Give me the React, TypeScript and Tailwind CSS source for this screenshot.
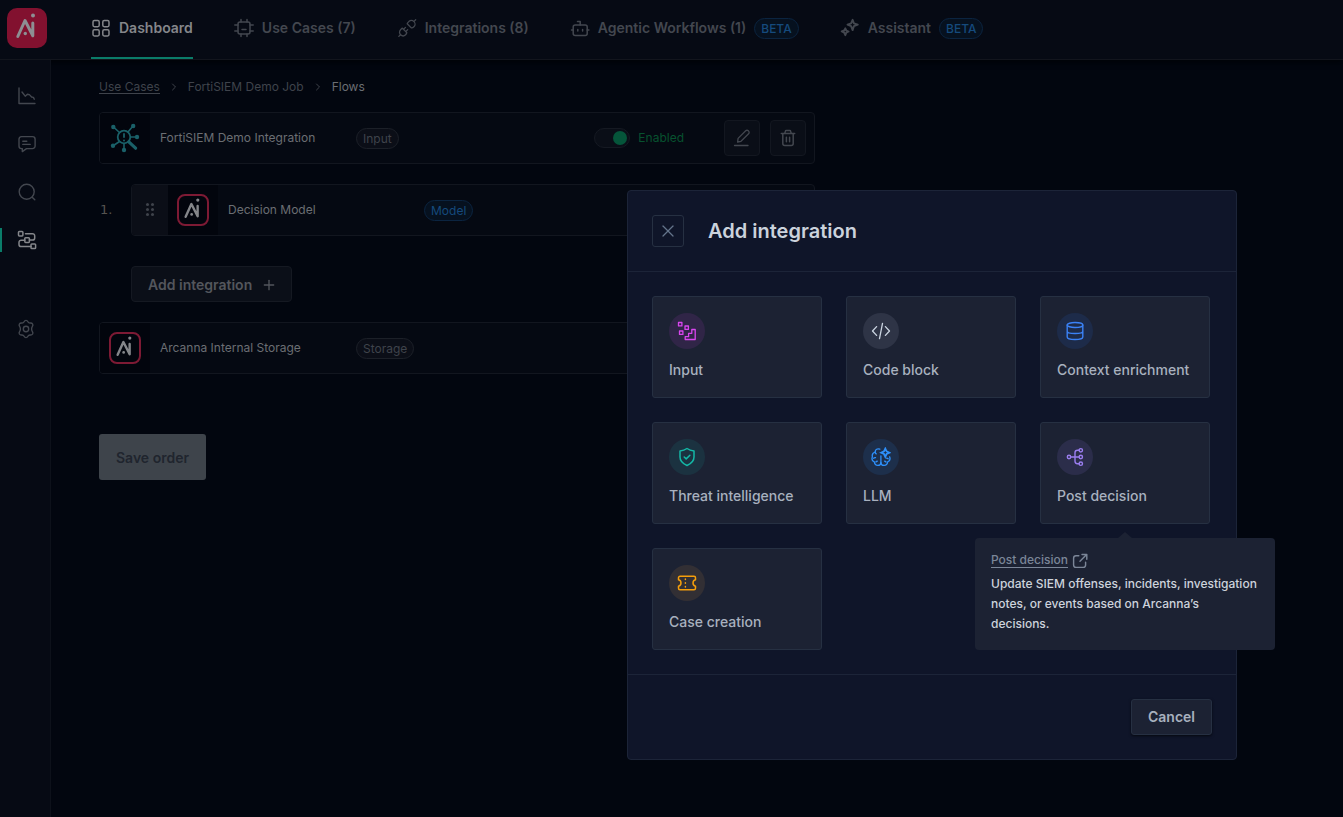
import type { ReactNode } from 'react';
import { ChevronRight, Plus, X } from 'lucide-react';

type IconProps = { className?: string };

function Svg({ className, width = 1.5, children }: IconProps & { width?: number; children: ReactNode }) {
  return (
    <svg
      className={className}
      viewBox="0 0 20 20"
      fill="none"
      stroke="currentColor"
      strokeWidth={width}
      strokeLinecap="round"
      strokeLinejoin="round"
      aria-hidden="true"
    >
      {children}
    </svg>
  );
}

const GridIcon = ({ className }: IconProps) => (
  <Svg className={className}>
    <rect x="2" y="2.5" width="6.2" height="6.2" rx="1.4" />
    <rect x="11.8" y="2.5" width="6.2" height="6.2" rx="1.4" />
    <rect x="2" y="11.8" width="6.2" height="6.2" rx="1.4" />
    <rect x="11.8" y="11.8" width="6.2" height="6.2" rx="1.4" />
  </Svg>
);

const ChipIcon = ({ className }: IconProps) => (
  <Svg className={className}>
    <rect x="4" y="4" width="12" height="12" rx="2" />
    <path d="M7 4V1.5M13 4V1.5M7 18.5V16M13 18.5V16M4 13H.8M19.2 13H16M.8 7H4M16 7h3.2M8 11.5h4" />
  </Svg>
);

const PlugIcon = ({ className }: IconProps) => (
  <Svg className={className} width={1.3}>
    <path d="M10.2 5.8l4 4c1 .2 2-.3 2.7-1 1.5-1.5 1.5-3.8.1-5.2s-3.7-1.4-5.2 0c-.8.8-1.4 1.5-1.6 2.2z" />
    <path d="M5.4 10.2l4.4 4.4c-.1.8-.6 1.5-1.2 2.1-1.5 1.5-3.6 1.4-5 0s-1.5-3.5 0-5c.6-.6 1.2-1.2 1.8-1.5z" />
    <path d="M17 3.4l1.7-1.7M3.5 16.7l-1.7 1.7M6.6 11.3l1.9-1.9M8.8 13.5l1.9-1.9" />
  </Svg>
);

const BotIcon = ({ className }: IconProps) => (
  <Svg className={className}>
    <rect x="3.2" y="7" width="14" height="10.5" rx="2" />
    <path d="M10.2 7V3.5H7.5M3.2 12H1.5M17.2 12h1.7M7.8 11.5v1.6M12.6 11.5v1.6" />
  </Svg>
);

const SparkIcon = ({ className }: IconProps) => (
  <Svg className={className} width={1.9}>
    <path d="M12.6 1.8l1.3 3.5 3.9 1.4-3.9 1.5-1.3 3.9-1.5-3.9L7.5 6.7l3.6-1.4z" />
    <path d="M5.3 10.3l1 2.2 2.3 1-2.3 1.1-1 2.6-1.1-2.6-2.5-1.1 2.5-1z" />
  </Svg>
);

const ChartIcon = ({ className }: IconProps) => (
  <Svg className={className} width={1.4}>
    <path d="M2 2v15.5h16M5 6l3.2 4.2 2.2-2 2 .4 2.2 2.4 1.8.4.9 1.8" />
  </Svg>
);

const ChatIcon = ({ className }: IconProps) => (
  <Svg className={className} width={1.4}>
    <path d="M4.5 2.6h11a2.600 2.600 0 0 1 2.600 2.600v6.800a2.600 2.600 0 0 1-2.600 2.600H9.500l-4.200 3v-3h-.8A2.600 2.600 0 0 1 2 12V5.200a2.600 2.600 0 0 1 2.500-2.600z" />
    <path d="M5.8 7.2h4M5.8 10.4h7.4" />
  </Svg>
);

const SearchIcon = ({ className }: IconProps) => (
  <Svg className={className} width={1.4}>
    <circle cx="9.7" cy="9.7" r="7.5" />
    <path d="M15.2 15.2l2.6 2.6" />
  </Svg>
);

const FlowIcon = ({ className }: IconProps) => (
  <Svg className={className} width={1.5}>
    <rect x="1.5" y="1.5" width="4.4" height="4.4" rx=".8" />
    <rect x="7.8" y="7.8" width="4.6" height="4.6" rx=".8" />
    <rect x="14" y="14" width="4.600" height="4.600" rx=".8" />
    <path d="M8.5 3.7h7a2.200 2.200 0 0 1 2.200 2.200v2a2.200 2.200 0 0 1-2.200 2.200h-3.100M7.800 10.200H4.200A2.200 2.200 0 0 0 2 12.400v2a2.200 2.200 0 0 0 2.200 2.200H14" />
  </Svg>
);

const GearIcon = ({ className }: IconProps) => (
  <Svg className={className} width={1.4}>
    <path d="M10 1.400c.9 0 1.500.5 1.900 1.300.5 1 1.300 1.400 2.400 1.300 1-.1 1.800.2 2.300 1 .5.9.3 1.700-.2 2.400-.7 1-.8 1.700-.8 2.600s.1 1.600.8 2.600c.5.7.7 1.500.2 2.400-.5.8-1.300 1.100-2.300 1-1.100-.1-1.900.3-2.400 1.300-.4.8-1 1.300-1.900 1.300s-1.500-.5-1.900-1.300c-.5-1-1.300-1.400-2.400-1.300-1 .1-1.800-.2-2.300-1-.5-.9-.3-1.700.2-2.400.7-1 .8-1.700.8-2.600s-.1-1.600-.8-2.600c-.5-.7-.7-1.500-.2-2.400.5-.8 1.300-1.100 2.300-1 1.100.1 1.900-.3 2.400-1.300.4-.8 1-1.300 1.900-1.300z" />
    <circle cx="10" cy="10" r="2.7" />
  </Svg>
);

const PenIcon = ({ className }: IconProps) => (
  <Svg className={className} width={1.3}>
    <path d="M5.600 14l.5-3.600 7.600-7.600a1.800 1.800 0 0 1 2.600 0l.3.3a1.800 1.800 0 0 1 0 2.600L9 13.300zM2.500 17.500h13.500" />
  </Svg>
);

const TrashIcon = ({ className }: IconProps) => (
  <Svg className={className} width={1.5}>
    <path d="M3.300 5.600h13.400M4.800 5.600v9.900a2 2 0 0 0 2 2h6.400a2 2 0 0 0 2-2V5.600M6.800 5.300l.5-1.900c.1-.5.5-.8 1-.8h3.400c.5 0 .9.3 1 .8l.5 1.900M8.400 9.200v4.600M11.600 9.200v4.600" />
  </Svg>
);

const StepsIcon = ({ className }: IconProps) => (
  <Svg className={className} width={1.3}>
    <rect x="1.5" y="1.5" width="3.4" height="3.4" />
    <rect x="8" y="5" width="3.4" height="3.4" />
    <rect x="2.5" y="10" width="3.4" height="3.4" />
    <path d="M18.2 8.500v10H8.200v-2.800h3.400v-3.400h3.200V8.500z" />
  </Svg>
);

const CodeIcon = ({ className }: IconProps) => (
  <Svg className={className} width={1.3}>
    <path d="M5.600 5.600L1.500 10l4.100 4.400M14.400 5.600l4.100 4.400-4.100 4.400M11.500 2.300l-3 15.400" />
  </Svg>
);

const DatabaseIcon = ({ className }: IconProps) => (
  <Svg className={className} width={1.4}>
    <ellipse cx="10" cy="4" rx="7.8" ry="2.5" />
    <path d="M2.200 4v12c0 1.400 3.500 2.500 7.800 2.500s7.800-1.100 7.800-2.500V4M2.200 10.200c0 1.400 3.500 2.300 7.800 2.300s7.800-.9 7.800-2.300" />
  </Svg>
);

const ShieldIcon = ({ className }: IconProps) => (
  <Svg className={className} width={1.5}>
    <path d="M10 1.500c2 1.500 4.500 2.300 7 2.500v6c0 4-3.200 6.800-7 8.500-3.800-1.700-7-4.500-7-8.500V4c2.500-.2 5-1 7-2.500z" />
    <path d="M7.200 10l2 1.900 3.700-3.600" />
  </Svg>
);

const BrainIcon = ({ className }: IconProps) => (
  <Svg className={className} width={1.3}>
    <path d="M8.800 2.200C6.500 1.200 4.200 2.400 4.200 5 2 5.700.9 7.800 1.400 9.800.6 11.800 1.200 14 3.300 14.900 3.600 17 5 18.400 6.800 18.400c1.700 0 3.100-1.300 3.100-3V8.800" />
    <path d="M9.900 15.400c0 1.700 1.500 3 3.200 3 1.900 0 3.300-1.400 3.600-3.500 2.100-.9 2.700-3.100 1.900-5.100M4.200 5c0 .8.4 1.500 1 1.900M2.600 11.200c.6-.5 1.200-.6 1.900-.5M15.600 11.200c.6 0 1.100.1 1.500.5M6.300 14.200c-.6.1-1.100.4-1.400.8M13.600 14.200c.6.1 1.100.4 1.400.8" />
    <path
      strokeWidth="1.800"
      strokeLinejoin="miter"
      d="M14.300 1.600l1.300 2.800 2.800 1.300-2.800 1.300-1.300 2.800L13 7l-2.800-1.300L13 4.400z"
    />
  </Svg>
);

const BranchIcon = ({ className }: IconProps) => (
  <Svg className={className} width={1.4}>
    <circle cx="4" cy="10" r="1.7" />
    <circle cx="15.8" cy="3.3" r="1.7" />
    <circle cx="15.8" cy="10" r="1.7" />
    <circle cx="15.8" cy="16.7" r="1.7" />
    <path d="M5.700 10h8.400M14.100 3.300h-1.700a2.400 2.400 0 0 0-2.400 2.400v8.600a2.400 2.400 0 0 0 2.400 2.400h1.700" />
  </Svg>
);

const TicketIcon = ({ className }: IconProps) => (
  <Svg className={className} width={1.5}>
    <path d="M3 3.300h14a1.500 1.500 0 0 1 1.500 1.500v2a3.300 3.300 0 0 0 0 6.400v2a1.500 1.500 0 0 1-1.500 1.500H3a1.500 1.500 0 0 1-1.500-1.500v-2a3.300 3.300 0 0 0 0-6.400v-2A1.500 1.500 0 0 1 3 3.300z" />
    <path d="M8.400 6v.5M8.400 9.700v.6M8.400 13.500v.5" />
  </Svg>
);

const ExternalIcon = ({ className }: IconProps) => (
  <Svg className={className} width={1.8}>
    <path d="M8.500 3.500H5A3 3 0 0 0 2 6.500V15a3 3 0 0 0 3 3h9a3 3 0 0 0 3-3v-3.500M12.500 1.800h6v6M18 2.300l-8 8" />
  </Svg>
);

function LogoMark({ className }: IconProps) {
  return (
    <svg className={className} viewBox="0 0 40 40" fill="none" aria-hidden="true">
      <path
        d="M10.800 28.500L18 12.500l7.800 15.300V15"
        stroke="currentColor"
        strokeWidth="3"
        strokeLinecap="round"
        strokeLinejoin="round"
      />
      <circle cx="26" cy="7.6" r="2" fill="currentColor" />
      <circle cx="18.3" cy="25.5" r="1.7" fill="currentColor" />
    </svg>
  );
}

function NetworkLogo({ className }: IconProps) {
  return (
    <svg className={className} viewBox="0 0 32 32" fill="none" stroke="currentColor" aria-hidden="true">
      <circle cx="15" cy="15" r="6.3" strokeWidth="1.8" />
      <path d="M10.500 10.500L5 5.500M19 10l5-6M21.500 15h6M10.500 19.500L4.500 23.500M15 21.500v6.500" strokeWidth="1.6" />
      <path d="M19.800 19.800l6.800 6.400" strokeWidth="3.2" strokeLinecap="round" />
      <path d="M15 11.200v4.600" strokeWidth="1.8" />
      <g fill="currentColor" stroke="none">
        <circle cx="15" cy="18.4" r="1" />
        <circle cx="4.3" cy="5" r="2.2" />
        <circle cx="24.2" cy="4" r="2.2" />
        <circle cx="28" cy="15" r="2.2" />
        <circle cx="4" cy="23.8" r="2.2" />
        <circle cx="15" cy="28" r="2.2" />
      </g>
    </svg>
  );
}

function ModelLogo() {
  return (
    <span className="flex size-8 items-center justify-center rounded-lg border-2 border-[#7d1a34] text-[#84868a]">
      <LogoMark className="size-8 shrink-0" />
    </span>
  );
}

const tabs = [
  { label: 'Dashboard', Icon: GridIcon, active: true },
  { label: 'Use Cases (7)', Icon: ChipIcon },
  { label: 'Integrations (8)', Icon: PlugIcon },
  { label: 'Agentic Workflows (1)', Icon: BotIcon, beta: true },
  { label: 'Assistant', Icon: SparkIcon, beta: true },
];

function Header() {
  return (
    <header className="flex h-15 items-stretch border-b border-[#12151d] bg-[#060a14] shadow-md shadow-black/40">
      <a href="#home" aria-label="Home" className="mt-2 ml-[7px] flex size-10 rounded-[10px] bg-[#82112f] text-[#8d8f93]">
        <LogoMark className="size-10" />
      </a>
      <nav aria-label="Main" className="ml-11 flex gap-[41px]">
        {tabs.map(({ label, Icon, active, beta }) => (
          <a
            key={label}
            href="#tab"
            className={
              'flex items-center gap-2 border-b-2 pb-px text-sm font-semibold whitespace-nowrap ' +
              (active ? 'border-[#0a7c69] text-[#84868a]' : 'border-transparent text-[#43474f]')
            }
          >
            <Icon className="size-5" />
            {label}
            {beta && (
              <span className="rounded-full border border-[#0b2440] bg-[#06111f] px-1.5 text-xs leading-[19px] font-medium text-[#154a7c]">
                BETA
              </span>
            )}
          </a>
        ))}
      </nav>
    </header>
  );
}

const sideItems = [
  { label: 'Analytics', Icon: ChartIcon },
  { label: 'Feedback', Icon: ChatIcon },
  { label: 'Explorer', Icon: SearchIcon },
  { label: 'Flows', Icon: FlowIcon, active: true },
];

function Sidebar() {
  return (
    <nav aria-label="Job" className="flex w-[51px] shrink-0 flex-col border-r border-[#0d111a] bg-[#060a14] pt-6 text-[#43474f]">
      <div className="flex flex-col gap-6">
        {sideItems.map(({ label, Icon, active }) => (
          <a
            key={label}
            href="#section"
            aria-label={label}
            className={
              'flex h-6 items-center border-l-2 pl-[15px] ' +
              (active ? 'border-[#0a7c69] text-[#84868a]' : 'border-transparent')
            }
          >
            <Icon className="size-5" />
          </a>
        ))}
      </div>
      <a href="#settings" aria-label="Settings" className="mt-[65px] flex h-6 items-center pl-4">
        <GearIcon className="size-5" />
      </a>
    </nav>
  );
}

function Pill({ tone, children }: { tone: 'gray' | 'blue'; children: ReactNode }) {
  return (
    <span
      className={
        'rounded-full border px-1.5 text-xs leading-[19px] ' +
        (tone === 'blue'
          ? 'border-[#0b2440] bg-[#06111f] text-[#154a7c]'
          : 'border-[#1c2028] bg-[#0b0e17] text-[#3f434b]')
      }
    >
      {children}
    </span>
  );
}

function FlowRow({
  logo,
  name,
  pill,
  tone = 'gray',
  handle,
  children,
}: {
  logo: ReactNode;
  name: string;
  pill: string;
  tone?: 'gray' | 'blue';
  handle?: boolean;
  children?: ReactNode;
}) {
  return (
    <div className="flex h-[52px] min-w-0 flex-1 items-stretch overflow-hidden rounded border border-[#12161f] bg-[#050912]">
      {handle && (
        <button aria-label="Reorder" className="flex w-9 items-center justify-center bg-[#0b0e17] text-[#3f434b]">
          <svg className="h-4 w-3" viewBox="0 0 12 16" fill="currentColor" aria-hidden="true">
            <circle cx="3.5" cy="2.5" r="1.5" />
            <circle cx="8.5" cy="2.5" r="1.5" />
            <circle cx="3.5" cy="7.5" r="1.5" />
            <circle cx="8.5" cy="7.5" r="1.5" />
            <circle cx="3.5" cy="12.5" r="1.5" />
            <circle cx="8.5" cy="12.5" r="1.5" />
          </svg>
        </button>
      )}
      <div className="flex w-[50px] shrink-0 items-center justify-center bg-[#02050d]">{logo}</div>
      <div className="flex min-w-0 flex-1 items-center pr-2 pl-2.5">
        <span className="w-49 text-xs text-[#6b6e73]">{name}</span>
        <Pill tone={tone}>{pill}</Pill>
        {children}
      </div>
    </div>
  );
}

const iconButton =
  'flex size-9 items-center justify-center rounded border border-[#131720] bg-[#0a0e17] text-[#43474f]';

function Flows() {
  return (
    <main className="min-w-0 flex-1 px-12 pt-4">
      <nav aria-label="Breadcrumb" className="flex h-[22px] items-center gap-2 text-xs text-[#3f434b]">
        <a href="#use-cases" className="border-b border-[#3f434b] leading-[13px]">
          Use Cases
        </a>
        <ChevronRight className="size-3" />
        <span>FortiSIEM Demo Job</span>
        <ChevronRight className="size-3" />
        <span className="text-[#6b6e73]">Flows</span>
      </nav>

      <div className="mt-3.5 flex max-w-[716px] flex-col gap-5">
        <div className="flex">
          <FlowRow logo={<NetworkLogo className="size-8 text-[#1a6068]" />} name="FortiSIEM Demo Integration" pill="Input">
            <label className="ml-auto flex items-center gap-2 text-xs text-[#07522f]">
              <input type="checkbox" role="switch" defaultChecked className="peer sr-only" />
              <span className="flex h-5 w-9 items-center justify-end rounded-full border border-[#151922] bg-[#0a0e17] px-0.5">
                <span className="size-3.5 rounded-full bg-[#05553a]" />
              </span>
              Enabled
            </label>
            <button aria-label="Edit" className={'ml-10 ' + iconButton}>
              <PenIcon className="size-5" />
            </button>
            <button aria-label="Delete" className={'ml-2.5 ' + iconButton}>
              <TrashIcon className="size-5" />
            </button>
          </FlowRow>
        </div>

        <div className="flex items-center">
          <span className="w-8 pl-px font-['DejaVu_Sans',sans-serif] text-[13px] text-[#55534f]">1.</span>
          <FlowRow handle logo={<ModelLogo />} name="Decision Model" pill="Model" tone="blue" />
        </div>

        <div className="mt-2.5 ml-8 flex">
          <button className="flex h-9 items-center gap-[9px] rounded border border-[#151922] bg-[#0b0f18] pt-px pr-3.5 pl-4 text-sm font-semibold text-[#53565c]">
            Add integration
            <Plus className="size-4" strokeWidth={2} />
          </button>
        </div>

        <div className="flex">
          <FlowRow logo={<ModelLogo />} name="Arcanna Internal Storage" pill="Storage" />
        </div>
      </div>

      <button className="mt-15 h-[46px] rounded-[3px] bg-[#3e444b] px-[17px] pt-px text-sm font-semibold text-[#20252e]">
        Save order
      </button>
    </main>
  );
}

const kinds = [
  { label: 'Input', Icon: StepsIcon, tint: 'bg-[#302547] text-[#d946ef]' },
  { label: 'Code block', Icon: CodeIcon, tint: 'bg-[#2e3446] text-[#cbd5e1]' },
  { label: 'Context enrichment', Icon: DatabaseIcon, tint: 'bg-[#1d2b49] text-[#3b82f6]' },
  { label: 'Threat intelligence', Icon: ShieldIcon, tint: 'bg-[#1b3240] text-[#14b8a6]' },
  { label: 'LLM', Icon: BrainIcon, tint: 'bg-[#1d2f4b] text-[#2e90fa]' },
  { label: 'Post decision', Icon: BranchIcon, tint: 'bg-[#2b2d4a] text-[#9b7ef0]', tip: true },
  { label: 'Case creation', Icon: TicketIcon, tint: 'bg-[#322f34] text-[#f59e0b]' },
];

function Tip() {
  return (
    <div
      role="tooltip"
      className="absolute top-full left-1/2 z-10 mt-3.5 w-[300px] -translate-x-1/2 rounded bg-[#1c2233] px-4 pt-3 pb-4 text-xs leading-5 font-medium text-[#cdd3dc]"
    >
      <svg className="absolute -top-1.5 left-1/2 h-1.5 w-3.5 -translate-x-1/2" viewBox="0 0 14 6" aria-hidden="true">
        <path d="M0 6L7 0l7 6z" fill="#1c2233" />
      </svg>
      <a href="#post-decision" className="mb-1 flex h-5 items-center gap-1 pt-px text-[#7b8698]">
        <span className="border-b border-[#7b8698] leading-[14px]">Post decision</span>
        <ExternalIcon className="size-4" />
      </a>
      <p>Update SIEM offenses, incidents, investigation notes, or events based on Arcanna’s decisions.</p>
    </div>
  );
}

function AddIntegrationDialog() {
  return (
    <section
      role="dialog"
      aria-labelledby="dialog-title"
      className="w-[610px] rounded border border-[#1c2438] bg-[#0f1529] text-[#cbd2dc]"
    >
      <div className="flex items-center gap-6 border-b border-[#1c2438] p-6">
        <button aria-label="Close" className="flex size-8 items-center justify-center rounded-[3px] border border-[#263042] text-[#64748b]">
          <X className="size-5" strokeWidth={1.5} />
        </button>
        <h2 id="dialog-title" className="text-xl font-semibold">
          Add integration
        </h2>
      </div>
      <div className="flex flex-wrap gap-6 p-6">
        {kinds.map(({ label, Icon, tint, tip }) => (
          <div key={label} className="relative">
            <button className="flex h-[102px] w-[170px] flex-col items-start rounded-[3px] border border-[#263042] bg-[#1c2233] p-4 text-sm font-medium whitespace-nowrap text-[#a8b1bf]">
              <span className={'mb-[11px] flex size-9 items-center justify-center rounded-full ' + tint}>
                <Icon className="size-5" />
              </span>
              {label}
            </button>
            {tip && <Tip />}
          </div>
        ))}
      </div>
      <div className="flex justify-end border-t border-[#1c2438] p-6">
        <button className="h-9 rounded-[3px] border border-[#263042] bg-[#1c2233] px-4 text-sm font-semibold text-[#a8b1bf] shadow-sm shadow-black/50">
          Cancel
        </button>
      </div>
    </section>
  );
}

export default function App() {
  return (
    <div className="relative flex min-h-screen flex-col bg-[#02060f] font-['Inter',sans-serif]">
      <Header />
      <div className="flex flex-1">
        <Sidebar />
        <Flows />
      </div>
      <div className="absolute inset-0 flex items-start justify-end pt-[190px] pr-[106px]">
        <AddIntegrationDialog />
      </div>
    </div>
  );
}
